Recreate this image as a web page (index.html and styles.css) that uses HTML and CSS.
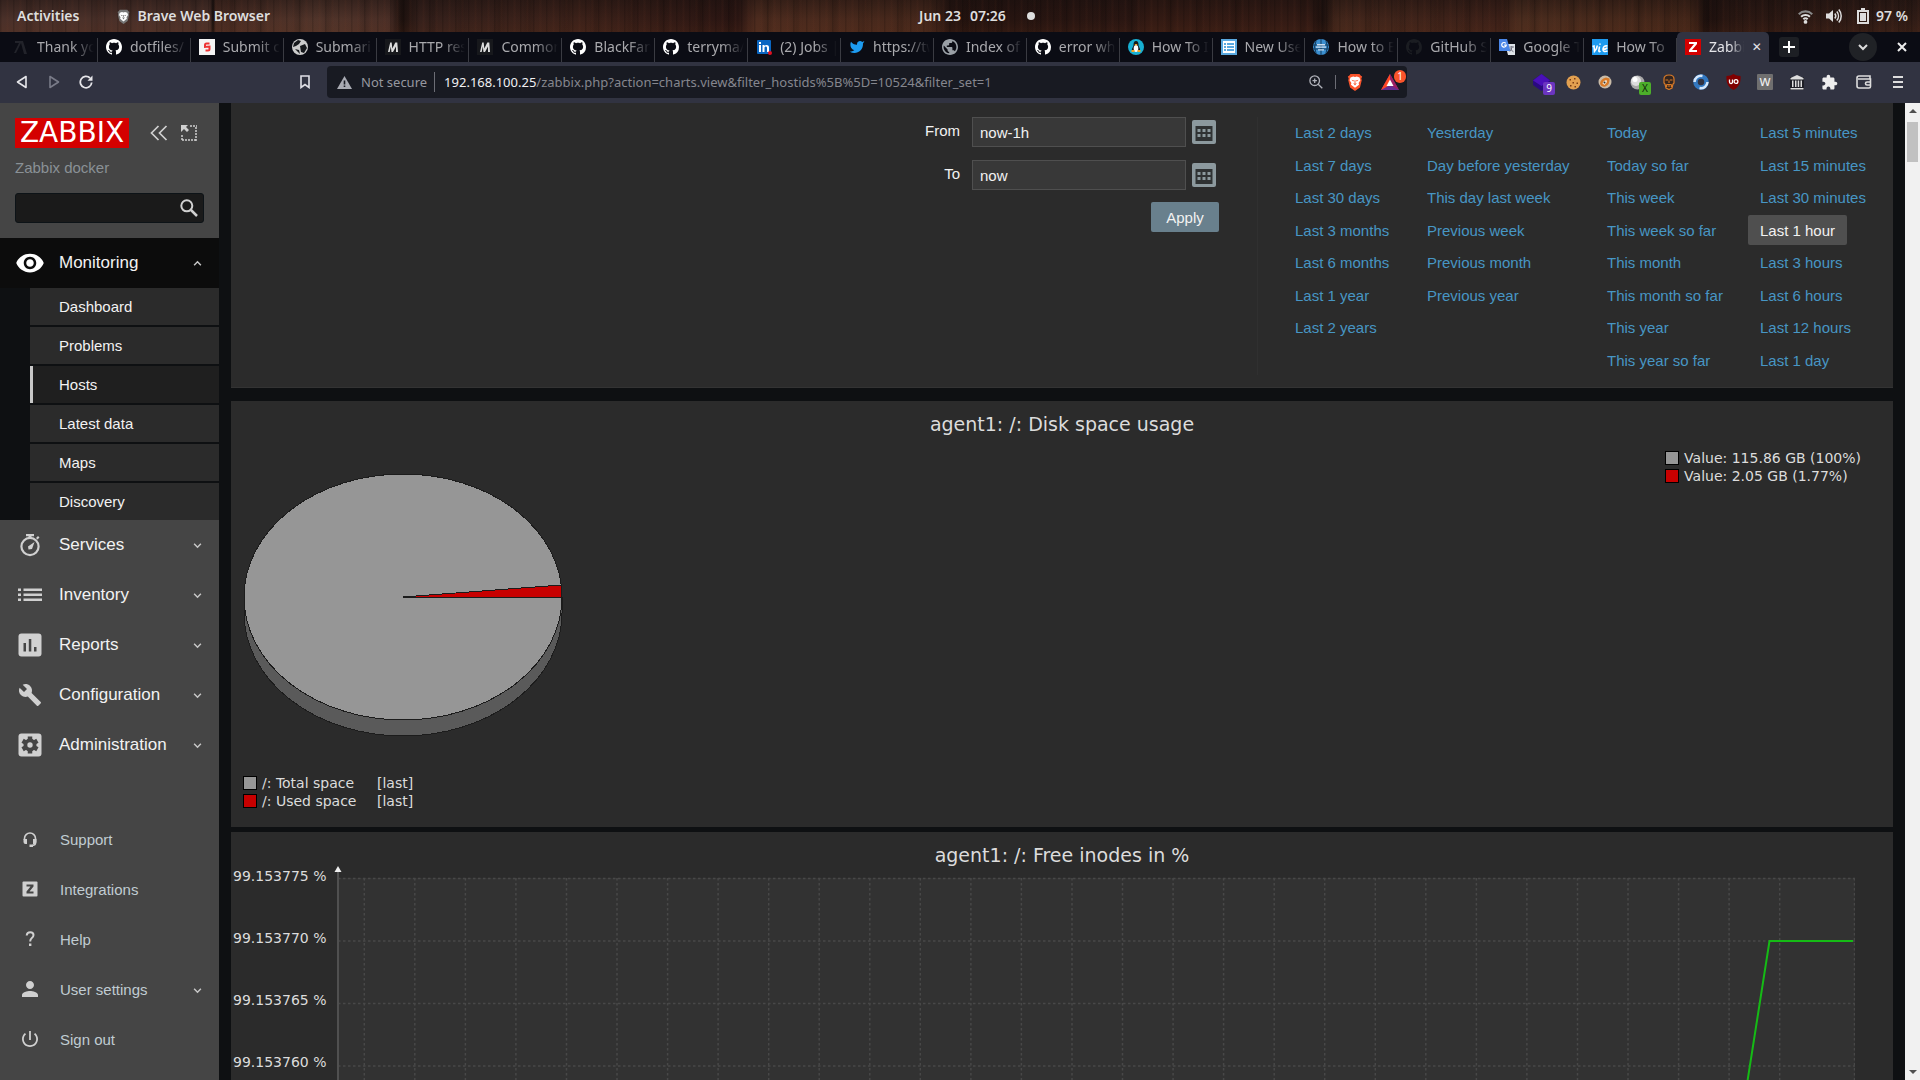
FILE: index.html
```html
<!DOCTYPE html>
<html lang="en">
<head>
<meta charset="utf-8">
<title>Zabbix docker: Charts</title>
<link rel="stylesheet" href="styles.css">
</head>
<body>
<svg class="defs" aria-hidden="true">
  <symbol id="github" viewBox="0 0 16 16"><path d="M8 0C3.58 0 0 3.58 0 8c0 3.54 2.29 6.53 5.47 7.59.4.07.55-.17.55-.38 0-.19-.01-.82-.01-1.49-2.01.37-2.53-.49-2.69-.94-.09-.23-.48-.94-.82-1.13-.28-.15-.68-.52-.01-.53.63-.01 1.08.58 1.23.82.72 1.21 1.87.87 2.33.66.07-.52.28-.87.51-1.07-1.78-.2-3.64-.89-3.64-3.95 0-.87.31-1.59.82-2.15-.08-.2-.36-1.02.08-2.12 0 0 .67-.21 2.2.82.64-.18 1.32-.27 2-.27s1.36.09 2 .27c1.53-1.04 2.2-.82 2.2-.82.44 1.1.16 1.92.08 2.12.51.56.82 1.27.82 2.15 0 3.07-1.87 3.75-3.65 3.95.29.25.54.73.54 1.48 0 1.07-.01 1.93-.01 2.2 0 .21.15.46.55.38A8.01 8.01 0 0 0 16 8c0-4.42-3.58-8-8-8z"/></symbol>
  <symbol id="globe" viewBox="2 2 20 20"><path d="M12 2C6.48 2 2 6.48 2 12s4.48 10 10 10 10-4.48 10-10S17.52 2 12 2zm-1 17.93c-3.95-.49-7-3.85-7-7.93 0-.62.08-1.21.21-1.79L9 15v1c0 1.1.9 2 2 2v1.93zm6.9-2.54c-.26-.81-1-1.39-1.9-1.39h-1v-3c0-.55-.45-1-1-1H8v-2h2c.55 0 1-.45 1-1V7h2c1.1 0 2-.9 2-2v-.41c2.93 1.19 5 4.06 5 7.41 0 2.08-.8 3.97-2.1 5.39z"/></symbol>
  <symbol id="medium" viewBox="0 0 16 16"><rect width="16" height="16" fill="#17181c"/><path d="M3 13 5.2 3.500 6.700 3.500 7.300 9.500 10.300 3.500 12.300 3.500 13 13 11 13 11 7.500 8 13 6.500 13 5.800 7.500 4.700 13Z" fill="#ddd"/></symbol>
  <symbol id="lion" viewBox="0 0 16 20"><path d="M3 1h10l1.500 2L16 4l-1 2 .500 2-2 8L8 20l-5.500-4-2-8L1 6 0 4l1.500-1z"/><path d="M3 5l3-1 2 .500L10 4l3 1 1 3-2 3 .500 2L8 16.500 3.500 13 4 11 2 8z" fill="#fff"/><path d="M4 7.500l3 .800-1 1.200zM12 7.500l-3 .800 1 1.200zM6 11l2 .800L10 11 8 14zM7.500 8h1v3h-1z"/></symbol>
  <symbol id="down" viewBox="0 0 8 6"><path d="M1 1.500 4 4.500 7 1.500" fill="none" stroke="currentColor" stroke-width="1.300"/></symbol>
  <symbol id="calendar" viewBox="0 0 24 24"><rect width="24" height="24" rx="2" fill="#8c999e"/><path d="M3.500 6h17v15h-17z" fill="#2f3233"/><path d="M5.500 9h3v3h-3zM10.500 9h3v3h-3zM15.500 9h3v3h-3zM5.500 14h3v3h-3zM10.500 14h3v3h-3zM15.500 14h3v3h-3z" fill="#8c999e"/></symbol>
</svg>

<header class="topbar">
  <div class="topbar-left">
    <button class="top-btn">Activities</button>
    <button class="top-btn"><svg class="app-icon" fill="#777"><use href="#lion"/></svg>Brave Web Browser</button>
  </div>
  <button class="top-btn clock"><span>Jun 23</span><span>07:26</span><i class="clock-dot"></i></button>
  <div class="topbar-right">
    <svg width="15" height="15" viewBox="0 0 16 16" fill="none" stroke="#ddd" stroke-width="2.200"><path d="M.800 5.500a10.300 10.300 0 0 1 14.400 0" stroke="#888"/><path d="M3.300 8.300a6.800 6.800 0 0 1 9.400 0M5.700 11a3.300 3.300 0 0 1 4.600 0"/><circle cx="8" cy="13.800" r="2" fill="#ddd" stroke="none"/></svg>
    <svg width="16" height="14" viewBox="0 0 16 14"><path d="M0 4.500h3L7 1v12L3 9.500H0z" fill="#ddd"/><path d="M8.800 4.500a4 4 0 0 1 0 5M10.800 2.500a7 7 0 0 1 0 9M12.800.500a10 10 0 0 1 0 13" fill="none" stroke="#ddd" stroke-width="1.500"/></svg>
    <span class="battery"><svg width="12" height="16" viewBox="0 0 12 16"><path d="M4 0h4v2h4v14H0V2h4zM2 4v10h8V4z" fill="#ddd" fill-rule="evenodd"/><path d="M3 5h6v8H3z" fill="#ddd"/></svg>97 %</span>
  </div>
</header>

<nav class="tabstrip" aria-label="Tabs">
  <div class="tabs">
    <a class="tab" href="#"><svg class="fav"><path d="M2 2h8l4 13H11L8 4 3 14H1L6 4H2z" fill="#22232a"/></svg><span>Thank you</span></a>
    <a class="tab" href="#"><svg class="fav" fill="#fff"><use href="#github"/></svg><span>dotfiles/</span></a>
    <a class="tab" href="#"><svg class="fav"><rect width="16" height="16" fill="#f4f4f4"/><path d="M10.500 4.500H7.500a1.500 1.500 0 0 0-1.500 1.500v2l4.500-.500V10a1.500 1.500 0 0 1-1.500 1.500H6.500" fill="none" stroke="#e33" stroke-width="2"/></svg><span>Submit c</span></a>
    <a class="tab" href="#"><svg class="fav"><circle cx="8" cy="8" r="8" fill="#ccc"/><path d="M2 4l4-3 3 1-2 3-3 2-3 1zM8 7l5-2 2 4-3 5-3-1zM3 10l4 1 1 4z" fill="#16181c"/></svg><span>Submari</span></a>
    <a class="tab" href="#"><svg class="fav"><use href="#medium"/></svg><span>HTTP res</span></a>
    <a class="tab" href="#"><svg class="fav"><use href="#medium"/></svg><span>Common</span></a>
    <a class="tab" href="#"><svg class="fav" fill="#fff"><use href="#github"/></svg><span>BlackFan</span></a>
    <a class="tab" href="#"><svg class="fav" fill="#fff"><use href="#github"/></svg><span>terryma/</span></a>
    <a class="tab" href="#"><svg class="fav"><rect x="1" y="1" width="14" height="14" rx="1" fill="#0a66c2"/><path d="M3 6h2v7H3zM3 3h2v2H3zM6.500 6h2v1c1-1.500 4.500-1.500 4.500 1.500V13h-2V9c0-2-2.500-2-2.500 0v4h-2z" fill="#fff"/><circle cx="14" cy="14" r="2" fill="#e01020"/></svg><span>(2) Jobs |</span></a>
    <a class="tab" href="#"><svg class="fav" viewBox="0 0 24 24"><path fill="#1d9bf0" d="M23 3a10.900 10.900 0 0 1-3.140 1.530 4.480 4.480 0 0 0-7.860 3v1A10.660 10.660 0 0 1 3 4s-4 9 5 13a11.640 11.640 0 0 1-7 2c9 5 20 0 20-11.500a4.500 4.500 0 0 0-.08-.83A7.720 7.720 0 0 0 23 3z"/></svg><span>https://tw</span></a>
    <a class="tab" href="#"><svg class="fav" fill="#9aa0a6"><use href="#globe"/></svg><span>Index of</span></a>
    <a class="tab" href="#"><svg class="fav" fill="#fff"><use href="#github"/></svg><span>error wh</span></a>
    <a class="tab" href="#"><svg class="fav"><circle cx="8" cy="8" r="8" fill="#17b1d4"/><path d="M8 2c2 0 2.500 2 2.500 4s2 3 1.500 6H4c-.500-3 1.500-4 1.500-6S6 2 8 2z" fill="#1a1a1a"/><ellipse cx="8" cy="9.500" rx="2.300" ry="3.500" fill="#fff"/><path d="M6.500 5h3L8 7zM3.500 11h3v2h-3zM9.500 11h3v2h-3z" fill="#f5a623"/></svg><span>How To I</span></a>
    <a class="tab" href="#"><svg class="fav"><path d="M0 0h16v16H0z" fill="#5aa9e0"/><path d="M2 2h12v12H2z" fill="#fff"/><path d="M3 4h2v2H3zM6 4h7v2H6zM3 7h2v2H3zM6 7h7v2H6zM3 10h2v2H3zM6 10h7v2H6z" fill="#5aa9e0"/></svg><span>New Use</span></a>
    <a class="tab" href="#"><svg class="fav"><circle cx="8" cy="8" r="8" fill="#3c8fd0"/><path d="M0 6h16M0 10h16M8 0v16M3 2q-3 6 0 12M13 2q3 6 0 12" fill="none" stroke="#123a5c"/><path d="M4 5h8v1.500H4zM3 7.500h10v1.200H3zM5 10.200h6v1.200H5z" fill="#cde"/></svg><span>How to E</span></a>
    <a class="tab" href="#"><svg class="fav" fill="#1b1d22"><use href="#github"/></svg><span>GitHub S</span></a>
    <a class="tab" href="#"><svg class="fav"><path d="M6 5h10v11H9z" fill="#dfe3e8"/><path d="M0 0h8l3.500 12H0z" fill="#4a86e8"/><path d="M6.800 4.300A2.300 2.300 0 1 0 7.300 6.200H5.200" fill="none" stroke="#fff" stroke-width="1.200"/><path d="M10.500 8h4.500M12.800 7v1.500q-.500 3-2 4M11.500 9.500q1 2.500 3 3.300" fill="none" stroke="#667" stroke-width=".9"/></svg><span>Google T</span></a>
    <a class="tab" href="#"><svg class="fav"><rect width="16" height="16" fill="#1d9bf0"/><path d="M.500 7.500 2 7l.500 5.500Q5 10 5.300 6.500M7.500 7.500 6.800 12q.200 1.500 1.700 0M8 4.500v1.200M15.500 7q-4-.800-4.500 3-.200 3.500 4.500 2M11.200 10.200q3.500 0 3.800-1.700" fill="none" stroke="#fff" stroke-width="1.600"/></svg><span>How To</span></a>
    <a class="tab tab-active" href="#" aria-current="page"><svg class="fav"><rect width="16" height="16" fill="#d40000"/><path d="M4 3h8v2l-5 6h5v2H4v-2l5-6H4z" fill="#fff"/></svg><span>Zabbix</span><b class="tab-close">✕</b></a>
  </div>
  <div class="window-controls">
    <button class="new-tab" aria-label="New tab"><svg width="12" height="12" viewBox="0 0 12 12"><path d="M6 0v12M0 6h12" stroke="#fff" stroke-width="2"/></svg></button>
    <button class="tab-search" aria-label="Search tabs"><svg width="10" height="7" viewBox="0 0 10 7"><path d="M1 1l4 4 4-4" fill="none" stroke="#ddd" stroke-width="2"/></svg></button>
    <button class="window-close" aria-label="Close"><svg width="10" height="10" viewBox="0 0 10 10"><path d="M1 1l8 8M9 1L1 9" stroke="#eee" stroke-width="2"/></svg></button>
  </div>
</nav>

<div class="toolbar">
  <div class="nav-buttons">
    <button aria-label="Back"><svg width="12" height="14" viewBox="0 0 12 14"><path d="M10 1.500v11L1.500 7z" fill="none" stroke="#e6e6ea" stroke-width="1.600" stroke-linejoin="round"/></svg></button>
    <button aria-label="Forward"><svg width="12" height="14" viewBox="0 0 12 14"><path d="M2 1.500v11L10.500 7z" fill="none" stroke="#797b88" stroke-width="1.600" stroke-linejoin="round"/></svg></button>
    <button aria-label="Reload"><svg width="14" height="14" viewBox="0 0 14 14"><path d="M11 3A5.700 5.700 0 1 0 12.700 7.500" fill="none" stroke="#e6e6ea" stroke-width="1.800"/><path d="M8.500 5.800h5V.600z" fill="#e6e6ea"/></svg></button>
  </div>
  <button class="bookmark" aria-label="Bookmark"><svg width="10" height="14" viewBox="0 0 10 14"><path d="M1 1h8v11.500L5 9.500l-4 3z" fill="none" stroke="#e0e0e6" stroke-width="1.600"/></svg></button>
  <div class="omnibox">
    <svg width="15" height="13" viewBox="0 0 15 13"><path d="M7.500 0 15 13H0z" fill="#a9abb3"/><path d="M6.700 4.500h1.600v4H6.700zM6.700 9.500h1.600V11H6.700z" fill="#181a22"/></svg>
    <span class="not-secure">Not secure</span>
    <span class="url"><b>192.168.100.25</b>/zabbix.php?action=charts.view&amp;filter_hostids%5B%5D=10524&amp;filter_set=1</span>
    <button class="zoom-btn" aria-label="Zoom"><svg width="14" height="14" viewBox="0 0 14 14" fill="none" stroke="#b0b2ba" stroke-width="1.300"><circle cx="5.700" cy="5.700" r="4.800"/><path d="M9.200 9.200 13.300 13.300M3.500 5.700h4.400M5.700 3.500v4.400"/></svg></button>
    <button class="shield" aria-label="Shields"><svg width="16" height="18" fill="#fb542b"><use href="#lion"/></svg></button>
    <button class="rewards" aria-label="Rewards"><svg width="18" height="16" viewBox="0 0 18 16"><path d="M9 0 0 16h18z" fill="#662d91"/><path d="M9 0 0 16l9-5z" fill="#ff4724"/><path d="M9 0v11l9 5z" fill="#9e1f63"/><path d="M9 5.500 5.500 12h7z" fill="#fff"/></svg><i class="badge badge-orange">1</i></button>
  </div>
  <div class="extensions">
    <button aria-label="Extension"><svg width="17" height="17" viewBox="0 0 17 17"><path d="M8.500 0 17 6v5l-8.500 6L0 11V6z" fill="#2a0a80"/><path d="M8.500 0 17 6.500 8.500 12 0 6.500z" fill="#4a10b8"/></svg><i class="badge badge-purple">9</i></button>
    <button aria-label="Cookies"><svg width="15" height="15" viewBox="0 0 15 15"><circle cx="7.500" cy="7.500" r="7" fill="#e2a050"/><path d="M3.500 4h1.500v1.500H3.500zM8 3h1.500v1.500H8zM6.500 7h1.500v1.500H6.500zM10.500 7.500H12V9h-1.500zM4 10h1.500v1.500H4zM8.500 11H10v1.500H8.500z" fill="#7a3d14"/></svg></button>
    <button aria-label="Fox"><svg width="14" height="14" viewBox="0 0 14 14"><circle cx="7" cy="7" r="6.500" fill="#c9bba8"/><path d="M2 9q0-5 6-6.500l3.500 1q.500 6-4 8-4 1-5.500-2.500z" fill="#d87a28"/><path d="M4.500 8.500Q5 5.500 8.500 5l.500 2-2.500 3z" fill="#f4e6d2"/><circle cx="6.500" cy="7.500" r="1" fill="#333"/></svg></button>
    <button aria-label="Proxy"><svg width="15" height="15" viewBox="0 0 15 15"><circle cx="7.500" cy="7.500" r="7" fill="#a8a8a8"/><circle cx="6" cy="6" r="5" fill="#ddd"/><circle cx="5" cy="4.500" r="2.500" fill="#fff"/></svg><i class="badge badge-green">X</i></button>
    <button aria-label="Profile"><svg width="14" height="16" viewBox="0 0 14 16"><path d="M2 9V5q0-4 5-4t5 4v4l-1 1-1 4-3 1.500L4 14l-1-4z" fill="#33251f" stroke="#d87a28" stroke-width="1.200"/><path d="M3.500 6h2.700M7.800 6h2.700M7 6.500V9M4.500 13v-2.500h5V13M5.500 12h3" fill="none" stroke="#d87a28"/></svg></button>
    <button aria-label="Swirl"><svg width="16" height="16" viewBox="0 0 16 16"><circle cx="8" cy="8" r="5.500" fill="none" stroke="#3278c0" stroke-width="4.500"/><path d="M1.500 8a6.500 6.500 0 0 1 8-6M14.500 8a6.500 6.500 0 0 1-8 6" fill="none" stroke="#d5e8fb" stroke-width="2.500"/></svg></button>
    <button aria-label="Blocker"><svg width="15" height="16" viewBox="0 0 15 16"><path d="M7.500 0Q10 2 14.500 2q1 10-7 14-8-4-7-14Q5 2 7.500 0z" fill="#800000"/><path d="M3.500 5.500v2.500q0 1.500 1.500 1.500T6.500 8V5.500" fill="none" stroke="#fff" stroke-width="1.300"/><circle cx="10" cy="7.500" r="1.900" fill="none" stroke="#fff" stroke-width="1.300"/></svg></button>
    <button><i class="ext-w">w</i></button>
    <button aria-label="Archive"><svg width="14" height="15" viewBox="0 0 14 15"><path d="M0 2h14v13H0z" fill="#1d1e25"/><path d="M7 0 13.500 3v1.500H.500V3zM2 5.500h1.500V12H2zM5 5.500h1.500V12H5zM7.700 5.500h1.500V12H7.700zM10.500 5.500H12V12h-1.500zM.500 13h13v1.500H.500z" fill="#ddd"/></svg></button>
    <button aria-label="Extensions"><svg width="17" height="17" viewBox="0 0 24 24" fill="#eee"><path d="M20.500 11H19V7c0-1.100-.9-2-2-2h-4V3.500C13 2.120 11.880 1 10.500 1S8 2.120 8 3.500V5H4c-1.100 0-1.990.9-1.990 2v3.800H3.500c1.490 0 2.700 1.210 2.700 2.700s-1.210 2.700-2.700 2.700H2V20c0 1.100.9 2 2 2h3.800v-1.500c0-1.490 1.210-2.700 2.700-2.700s2.700 1.210 2.700 2.700V22H17c1.100 0 2-.9 2-2v-4h1.500c1.380 0 2.500-1.120 2.500-2.500S21.880 11 20.500 11z"/></svg></button>
    <button aria-label="Wallet"><svg width="16" height="14" viewBox="0 0 16 14" fill="none" stroke="#ddd" stroke-width="1.600"><path d="M14 4V1H3Q1 1 1 3v8q0 2 2 2h10q1.500 0 1.500-1.500V4H2M15 7h-4q-1.500 0-1.500 1.500T11 10h4"/></svg></button>
    <button aria-label="Menu"><svg width="10" height="12" viewBox="0 0 10 12"><path d="M0 1h10M0 6h10M0 11h10" stroke="#ddd" stroke-width="1.800"/></svg></button>
  </div>
</div>

<div class="page">
  <aside class="sidebar">
    <div class="side-head">
      <div class="brand">
        <a class="logo" href="#">ZABBIX</a>
        <button aria-label="Hide sidebar"><svg width="18" height="16" viewBox="0 0 18 16"><path d="M8.500 1 1.500 8l7 7M16.500 1l-7 7 7 7" fill="none" stroke="#d0d0d0" stroke-width="1.700"/></svg></button>
        <button aria-label="Kiosk mode"><svg width="16" height="16" viewBox="0 0 16 16"><path d="M9 1h7M15 2v14M15 15H0M1 15V9" fill="none" stroke="#d0d0d0" stroke-width="1.500" stroke-dasharray="2 1"/><path d="M0 0h7L5 2l3 3-2 2-3-3-3 3z" fill="#d0d0d0"/></svg></button>
      </div>
      <div class="server">Zabbix docker</div>
      <div class="search"><input type="text" aria-label="Search"><svg width="18" height="18" viewBox="0 0 18 18"><circle cx="6.800" cy="6.800" r="5.500" fill="none" stroke="#d0d0d0" stroke-width="2"/><path d="M11 11l6 6" stroke="#d0d0d0" stroke-width="2.500"/></svg></div>
    </div>
    <a class="menu-item menu-open" href="#"><svg class="mi" width="30" height="30" viewBox="0 0 24 24"><path fill="#fff" d="M12 4.500C7 4.500 2.730 7.610 1 12c1.730 4.390 6 7.500 11 7.500s9.270-3.110 11-7.500c-1.730-4.390-6-7.500-11-7.500zM12 17c-2.760 0-5-2.240-5-5s2.240-5 5-5 5 2.240 5 5-2.240 5-5 5zm0-8c-1.660 0-3 1.340-3 3s1.340 3 3 3 3-1.340 3-3-1.340-3-3-3z"/></svg><span>Monitoring</span><svg class="chev chev-up"><use href="#down"/></svg></a>
    <nav class="submenu">
      <a href="#">Dashboard</a>
      <a href="#">Problems</a>
      <a class="current" href="#">Hosts</a>
      <a href="#">Latest data</a>
      <a href="#">Maps</a>
      <a href="#">Discovery</a>
    </nav>
    <nav class="menu">
      <a class="menu-item" href="#"><svg class="mi" width="24" height="24" viewBox="0 0 24 24"><circle cx="12" cy="13.500" r="8.600" fill="none" stroke="#d0d0d0" stroke-width="2.200"/><path d="M8 1h8v2.200h-2.500V5h-3V3.200H8zM18 5l2-2 1.500 1.500-2 2zM16.500 9l-2.500 7-3.500.500-.500-3z" fill="#d0d0d0"/></svg><span>Services</span><svg class="chev"><use href="#down"/></svg></a>
      <a class="menu-item" href="#"><svg class="mi" width="24" height="24" viewBox="0 0 24 24"><path d="M0 5.500h3v2.500H0zM5.500 5.500H24v2.500H5.500zM0 10.500h3V13H0zM5.500 10.500H24V13H5.500zM0 15.500h3V18H0zM5.500 15.500H24V18H5.500z" fill="#d0d0d0"/></svg><span>Inventory</span><svg class="chev"><use href="#down"/></svg></a>
      <a class="menu-item" href="#"><svg class="mi" width="24" height="24" viewBox="0 0 24 24"><rect x=".5" y=".5" width="23" height="23" rx="3" fill="#d0d0d0"/><path d="M5.500 10h2.500v8.500H5.500zM10.800 6h2.500v12.500h-2.500zM16 14h2.500v4.500H16z" fill="#454545"/></svg><span>Reports</span><svg class="chev"><use href="#down"/></svg></a>
      <a class="menu-item" href="#"><svg class="mi" width="24" height="24" viewBox="0 0 24 24"><path fill="#d0d0d0" d="M22.700 19l-9.100-9.100c.9-2.300.4-5-1.500-6.900-2-2-5-2.400-7.400-1.300L9 6 6 9 1.600 4.700C.4 7.100.9 10.100 2.900 12.100c1.900 1.900 4.600 2.400 6.900 1.500l9.100 9.100c.4.4 1 .4 1.400 0l2.300-2.300c.5-.4.5-1.100.1-1.400z"/></svg><span>Configuration</span><svg class="chev"><use href="#down"/></svg></a>
      <a class="menu-item" href="#"><svg class="mi" width="24" height="24" viewBox="0 0 24 24"><rect x=".5" y=".5" width="23" height="23" rx="3" fill="#d0d0d0"/><circle cx="12" cy="12" r="6.500" fill="#454545"/><path d="M12 3.500v17M4.600 7.800l14.800 8.400M4.600 16.200l14.800-8.400" stroke="#454545" stroke-width="4.500"/><circle cx="12" cy="12" r="2.700" fill="#d0d0d0"/></svg><span>Administration</span><svg class="chev"><use href="#down"/></svg></a>
    </nav>
    <nav class="menu menu-user">
      <a class="menu-item" href="#"><svg class="mi" width="16" height="16" viewBox="0 0 16 16"><path d="M2.500 9V7.500a5.500 5.500 0 0 1 11 0V12q0 2-3 2.500" fill="none" stroke="#d0d0d0" stroke-width="1.600"/><path d="M1.500 8H5v5H3.500q-2 0-2-2zM11 8h3.500v3q0 2-2 2H11zM7.500 13.500H11V16H7.500z" fill="#d0d0d0"/></svg><span>Support</span></a>
      <a class="menu-item" href="#"><svg class="mi" width="16" height="16" viewBox="0 0 16 16"><rect x=".5" y=".5" width="15" height="15" rx="1" fill="#d0d0d0"/><path d="M4.500 3.500h7v2L7.500 10.500h4v2h-7v-2l4-5h-4z" fill="#454545"/></svg><span>Integrations</span></a>
      <a class="menu-item" href="#"><svg class="mi" width="16" height="16" viewBox="0 0 16 16"><path d="M4.700 4.500Q5 1.200 8.300 1.200q3.200 0 3.200 2.800 0 1.700-1.700 3T8.200 10.500" fill="none" stroke="#d0d0d0" stroke-width="2"/><path d="M7 12.500h2.400V15H7z" fill="#d0d0d0"/></svg><span>Help</span></a>
      <a class="menu-item" href="#"><svg class="mi" width="16" height="16" viewBox="4 4 16 16"><path fill="#d0d0d0" d="M12 12c2.210 0 4-1.790 4-4s-1.790-4-4-4-4 1.790-4 4 1.790 4 4 4zm0 2c-2.670 0-8 1.340-8 4v2h16v-2c0-2.660-5.330-4-8-4z"/></svg><span>User settings</span><svg class="chev"><use href="#down"/></svg></a>
      <a class="menu-item" href="#"><svg class="mi" width="16" height="16" viewBox="3 3 18 18"><path fill="#d0d0d0" d="M13 3h-2v10h2V3zm4.830 2.170l-1.420 1.420C17.990 7.860 19 9.810 19 12c0 3.870-3.130 7-7 7s-7-3.130-7-7c0-2.190 1.010-4.140 2.580-5.420L6.170 5.170C4.230 6.820 3 9.260 3 12c0 4.970 4.030 9 9 9s9-4.030 9-9c0-2.740-1.230-5.180-3.170-6.830z"/></svg><span>Sign out</span></a>
    </nav>
  </aside>

  <main class="content">
    <section class="panel filter">
      <form class="range">
        <label for="from">From</label><input id="from" type="text" value="now-1h"><button type="button" class="cal" aria-label="Pick start"><svg width="24" height="24"><use href="#calendar"/></svg></button>
        <label for="to">To</label><input id="to" type="text" value="now"><button type="button" class="cal" aria-label="Pick end"><svg width="24" height="24"><use href="#calendar"/></svg></button>
        <button type="button" class="apply">Apply</button>
      </form>
      <div class="presets">
        <div><a href="#">Last 2 days</a><a href="#">Last 7 days</a><a href="#">Last 30 days</a><a href="#">Last 3 months</a><a href="#">Last 6 months</a><a href="#">Last 1 year</a><a href="#">Last 2 years</a></div>
        <div><a href="#">Yesterday</a><a href="#">Day before yesterday</a><a href="#">This day last week</a><a href="#">Previous week</a><a href="#">Previous month</a><a href="#">Previous year</a></div>
        <div><a href="#">Today</a><a href="#">Today so far</a><a href="#">This week</a><a href="#">This week so far</a><a href="#">This month</a><a href="#">This month so far</a><a href="#">This year</a><a href="#">This year so far</a></div>
        <div><a href="#">Last 5 minutes</a><a href="#">Last 15 minutes</a><a href="#">Last 30 minutes</a><a class="selected" href="#">Last 1 hour</a><a href="#">Last 3 hours</a><a href="#">Last 6 hours</a><a href="#">Last 12 hours</a><a href="#">Last 1 day</a></div>
      </div>
    </section>

    <section class="panel graph pie-graph">
      <h2>agent1: /: Disk space usage</h2>
      <div class="pie-body">
        <svg width="320" height="266" viewBox="0 0 320 266" shape-rendering="crispEdges">
          <path d="M1 123v16a159 123 0 0 0 318 0v-16z" fill="#5a5a5a" stroke="#1c1c1c"/>
          <ellipse cx="160" cy="123" rx="159" ry="123" fill="#969696" stroke="#1c1c1c"/>
          <path d="M160 123 318 111l1 12z" fill="#c80000" stroke="#1c1c1c"/>
        </svg>
        <ul class="legend values"><li><i class="sw sw-grey"></i>Value: 115.86 GB (100%)</li><li><i class="sw sw-red"></i>Value: 2.05 GB (1.77%)</li></ul>
      </div>
      <ul class="legend names"><li><i class="sw sw-grey"></i><span>/: Total space</span>[last]</li><li><i class="sw sw-red"></i><span>/: Used space</span>[last]</li></ul>
    </section>

    <section class="panel graph line-graph">
      <h2>agent1: /: Free inodes in %</h2>
      <div class="plot">
        <div class="y-labels"><span>99.153775 %</span><span>99.153770 %</span><span>99.153765 %</span><span>99.153760 %</span></div>
        <svg class="plot-area" viewBox="0 0 1524 215" preserveAspectRatio="none">
          <path d="M7 12H1524V215H7z" fill="#323232"/>
          <g fill="none" stroke="#484848" stroke-width="1.500" stroke-dasharray="2.500 2.500">
            <path d="M7 12.500H1524M7 75H1524M7 137.500H1524M7 200H1524"/>
            <path d="M33.300 12v203M83.800 12v203M134.400 12v203M184.900 12v203M235.500 12v203M286 12v203M336.600 12v203M387.100 12v203M437.700 12v203M488.200 12v203M538.800 12v203M589.300 12v203M639.900 12v203M690.400 12v203M741 12v203M791.500 12v203M842.100 12v203M892.600 12v203M943.200 12v203M993.700 12v203M1044.300 12v203M1094.800 12v203M1145.400 12v203M1195.900 12v203M1246.500 12v203M1297 12v203M1347.600 12v203M1398.100 12v203M1448.700 12v203M1523.500 12v203"/>
          </g>
          <path d="M7 5v210" stroke="#505050" stroke-width="2"/>
          <path d="M7 0 10.500 6h-7z" fill="#eee"/>
          <path d="M1416.500 215 1438.500 75H1522" fill="none" stroke="#15bb15" stroke-width="2"/>
        </svg>
      </div>
    </section>
  </main>

  <div class="scrollbar" aria-hidden="true"><i class="arrow arrow-up"></i><i class="thumb"></i><i class="arrow arrow-down"></i></div>
</div>
</body>
</html>
```
FILE: styles.css
```css
* { box-sizing: border-box; }
body {
  margin: 0;
  height: 100vh;
  display: flex;
  flex-direction: column;
  overflow: hidden;
  background: #0e1012;
  color: #f2f2f2;
  font: 15px/20px "Liberation Sans", Arial, sans-serif;
}
button { background: none; border: 0; padding: 0; color: inherit; font: inherit; }
button svg { display: block; }
a { color: inherit; text-decoration: none; }
i { font-style: normal; }
ul { list-style: none; margin: 0; padding: 0; }
.defs { position: absolute; width: 0; height: 0; }

/* desktop bar */
.topbar {
  flex: none;
  height: 32px;
  display: grid;
  grid-template-columns: 1fr auto 1fr;
  align-items: center;
  padding: 0 12px 0 17px;
  font: 600 14px/20px "Noto Sans", sans-serif;
  color: #dedede;
  background:
    repeating-linear-gradient(90deg, rgba(0,0,0,.14) 0 1px, transparent 2px 6px, rgba(120,60,40,.08) 7px 8px, transparent 9px 13px),
    repeating-linear-gradient(91deg, transparent 0 23px, rgba(0,0,0,.12) 31px, transparent 37px 53px, rgba(0,0,0,.1) 60px, transparent 67px),
    linear-gradient(180deg, rgba(20,14,14,.4), transparent 60%, rgba(120,60,30,.12)),
    linear-gradient(90deg, #4a3029 0, #4a3029 210px, #160e0c 213px, #482b22 216px, #50342a 320px, #4a2e26 390px, #1c100d 402px, #35201b 420px, #3c2119 580px, #2a1512 738px, #4c2b1e 756px, #45271b 930px, #24130f 950px, #2a1612 1130px, #331a13 1150px, #321a14 1310px, #190e0c 1322px, #42261b 1335px, #3c2018 1500px, #4a2c1e 1520px, #422518 1690px, #1b0f0d 1708px, #2a1712 1730px, #301c16 100%);
}
.topbar-left, .topbar-right { display: flex; align-items: center; }
.topbar-left { gap: 38px; }
.topbar-right { justify-content: flex-end; gap: 13px; }
.top-btn { display: flex; align-items: center; gap: 7px; }
.app-icon { width: 13px; height: 15px; }
.clock { position: relative; gap: 9px; }
.clock-dot { position: absolute; left: 100%; margin-left: 21px; width: 8px; height: 8px; border-radius: 50%; background: #dedede; }
.battery { display: flex; align-items: center; gap: 7px; margin-left: 2px; }

/* browser tabs */
.tabstrip { flex: none; height: 30px; display: flex; background: #0b0c14; font: 14px/20px "Noto Sans", sans-serif; color: #a9a9ad; }
.tabs { flex: 1; min-width: 0; display: flex; padding-left: 5px; }
.tab { flex: 1 1 0; min-width: 0; display: flex; align-items: center; gap: 8px; padding: 0 3px 0 8px; border-style: solid; border-color: #3a3b42; border-image: linear-gradient(#0b0c14 7px, #3a3b42 7px) 1; border-width: 0 1px 0 0; }
.tab span { flex: 1; min-width: 0; overflow: hidden; white-space: nowrap; mask-image: linear-gradient(90deg, #000 60%, transparent); }
.tab-active { background: #313341; border: 0; border-radius: 5px 5px 0 0; color: #e4e4e8; }
.tab-close { font-size: 12px; font-family: "DejaVu Sans", sans-serif; padding-right: 4px; }
.fav { flex: none; width: 16px; height: 16px; }
.window-controls { flex: none; width: 151px; display: flex; align-items: center; padding: 0 13px 0 10px; }
.new-tab { width: 20px; height: 20px; border-radius: 3px; background: #1d1f24; display: grid; place-items: center; }
.tab-search { width: 28px; height: 28px; border-radius: 50%; background: #202226; display: grid; place-items: center; margin: 0 20px 0 auto; }

/* browser toolbar */
.toolbar { flex: none; height: 41px; padding-bottom: 1px; display: flex; align-items: center; background: #313341; font: 13px/20px "Noto Sans", sans-serif; }
.toolbar button { position: relative; display: grid; place-items: center; }
.nav-buttons { display: flex; padding-left: 6px; }
.nav-buttons button { width: 32px; height: 32px; }
.bookmark { margin: 0 17px 0 198px; }
.omnibox { flex: 1; height: 32px; display: flex; align-items: center; padding: 0 8px 0 10px; border-radius: 4px; background: #181a22; }
.not-secure { color: #96979f; padding: 0 7px 0 9px; border-right: 1px solid #6c6d75; }
.url { flex: 1; color: #85868e; padding-left: 9px; white-space: nowrap; overflow: hidden; }
.url b { font-weight: 400; color: #f0f0f2; }
.zoom-btn { padding-right: 12px; border-right: 1px solid #6c6d75; }
.shield { margin: 0 18px 0 11px; }
.toolbar .badge { position: absolute; left: 18px; top: 13px; min-width: 12px; height: 13px; border-radius: 2px; text-align: center; font-size: 10px; line-height: 13px; color: #fff; }
.toolbar .badge-orange { left: 13px; top: -4px; border-radius: 7px; background: #fb542b; }
.badge-purple { background: #6b35c0; }
.toolbar .badge-green { background: #4cae2a; color: #10240a; }
.extensions { display: flex; flex: none; padding: 0 5px 0 118px; }
.extensions button { width: 32px; height: 26px; }
.extensions button:nth-last-child(-n+2) { width: 34px; }
.extensions button:nth-last-child(3) { margin-right: 2px; }
.ext-w { width: 16px; height: 16px; border-radius: 1px; background: #6f6f6f; color: #eee; font-size: 14px; line-height: 14px; text-align: center; }

/* zabbix page */
.page { flex: 1; min-height: 0; display: flex; }
.sidebar { flex: none; width: 219px; background: #454545; }
.side-head { padding: 15px 15px 15px; }
.brand { display: flex; align-items: center; }
.logo { width: 114px; height: 30px; background: #d40000; color: #fff; text-align: center; font: 28px/30px "DejaVu Sans", sans-serif; }
.brand button { margin-left: 21px; }
.brand button + button { margin-left: 13px; }
.server { margin: 10px 0 15px; color: #8a9196; }
.search { display: flex; align-items: center; height: 30px; border: 1px solid #0d1317; border-radius: 3px; background: #1a1a1a; padding-right: 5px; }
.search input { flex: 1; min-width: 0; height: 28px; border: 0; background: none; color: #f2f2f2; font: inherit; }
.menu-item { display: flex; align-items: center; height: 50px; padding: 0 17px 0 0; font-size: 17px; }
.menu-item span { flex: 1; }
.mi { flex: none; }
.menu-item .mi { margin: 0 17px 0 18px; }
.menu-open { background: #0c0c0c; }
.menu-item.menu-open .mi { margin: 0 14px 0 15px; }
.chev { width: 9px; height: 7px; color: #c8c8c8; }
.chev-up { transform: rotate(180deg); }
.submenu { display: flex; flex-direction: column; gap: 2px; padding-left: 30px; background: #0e1012; }
.submenu a { height: 37px; padding-left: 29px; line-height: 37px; background: #2b2b2b; }
.submenu .current { background: #1f1f1f; border-left: 3px solid #c8c8c8; padding-left: 26px; }
.menu-user { padding-top: 45px; }
.menu-user .menu-item { font-size: 15px; color: #c0ccd2; }
.menu-user .menu-item .mi { margin: 0 22px 3px; }

.content { flex: 1; min-width: 0; padding: 0 12px; }
.panel { background: #2b2b2b; }
.filter { display: flex; min-height: 285px; padding: 14px 14px 12px; margin-bottom: 13px; border-bottom: 1px solid #333; }
.range { flex: 1; display: grid; grid-template-columns: 1fr 214px 33px; grid-auto-rows: 30px; row-gap: 13px; padding-right: 38px; align-content: start; }
.range label { text-align: right; padding-right: 12px; line-height: 28px; }
.range input { height: 30px; border: 1px solid #4f4f4f; background: #383838; color: #f2f2f2; padding: 1px 7px 0; font: inherit; }
.cal { justify-self: start; margin-left: 6px; }
.apply { grid-column: 2 / 4; justify-self: end; width: 68px; height: 30px; border-radius: 2px; background: #69808d; color: #f2f2f2; padding-top: 2px; margin-top: -1px; }
.presets { display: grid; grid-template-columns: 132px 180px 153px 131px; padding-left: 25px; border-left: 1px solid #303030; }
.presets div { display: grid; grid-template-rows: repeat(8, 30px); align-content: space-between; justify-items: start; }
.presets a { padding: 0 12px; line-height: 32px; height: 30px; border-radius: 2px; color: #4796c4; white-space: nowrap; }
.presets .selected { background: #4f4f4f; color: #f2f2f2; }

.graph { font: 14px/18px "DejaVu Sans", sans-serif; color: #dcdcdc; margin-bottom: 5px; }
.graph h2 { margin: 0; padding: 12px 0; text-align: center; font-weight: 400; font-size: 19px; line-height: 22px; }
.pie-graph { padding-bottom: 17px; }
.pie-body { display: flex; justify-content: space-between; padding: 2px 32px 0 12px; }
.pie-body svg { margin-top: 25px; }
.legend li { display: flex; align-items: center; }
.sw { width: 14px; height: 14px; margin-right: 5px; border: 1px solid #000; }
.sw-grey { background: #969696; }
.sw-red { background: #c80000; }
.names { padding: 34px 0 0 12px; }
.names span { width: 115px; }
.line-graph h2 { padding-bottom: 0; }
.plot { display: flex; }
.y-labels { flex: none; width: 100px; padding: 1px 0 0 2px; display: flex; flex-direction: column; gap: 44px; }
.plot-area { flex: 1; min-width: 0; height: 215px; margin-right: 38px; }

.scrollbar { flex: none; width: 15px; display: flex; flex-direction: column; align-items: center; padding: 6px 0; background: #f1f1f1; }
.thumb { width: 11px; height: 40px; margin-top: 9px; background: #c1c1c1; }
.arrow { border: 4px solid transparent; }
.arrow-up { border-top: 0; border-bottom-color: #505050; }
.arrow-down { margin-top: auto; border-bottom: 0; border-top-color: #505050; }
```
